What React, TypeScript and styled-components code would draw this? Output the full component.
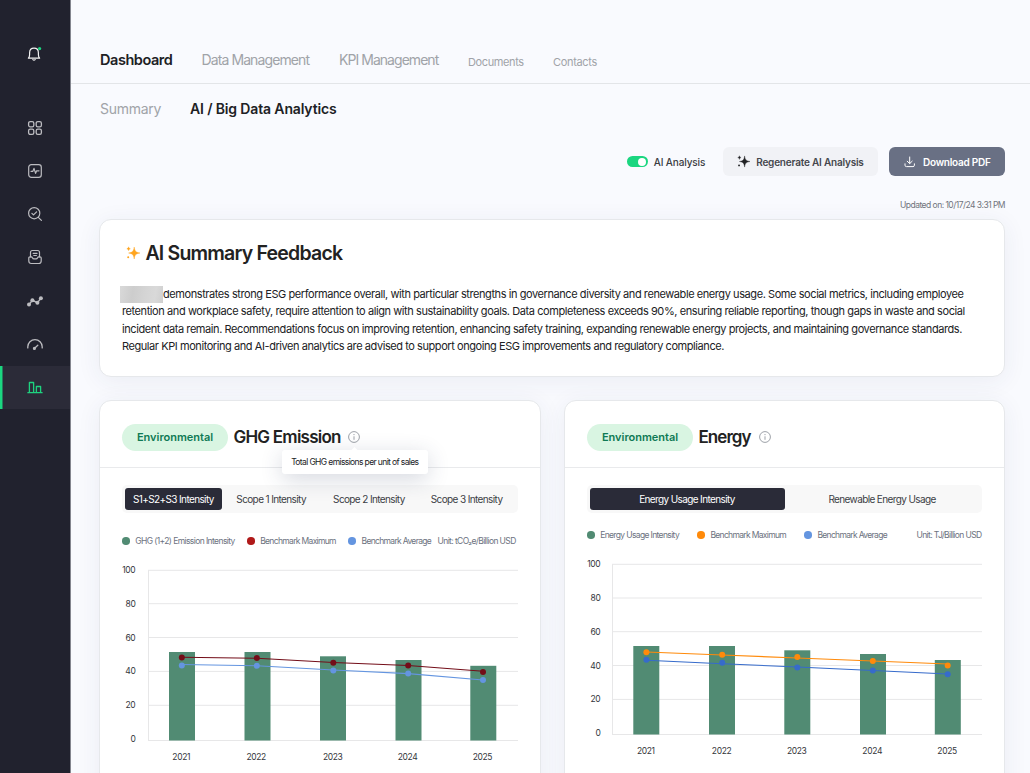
import React from "react";
import styled, { createGlobalStyle } from "styled-components";

const GlobalStyle = createGlobalStyle`
  *, *::before, *::after { box-sizing: border-box; }
  body {
    margin: 0;
    background: #f9fafe;
    font-family: Inter, "Liberation Sans", sans-serif;
    color: #222;
    overflow: hidden;
  }
`;

const Page = styled.div`
  display: flex;
  width: 1030px;
  height: 773px;
  overflow: hidden;
`;

const Sidebar = styled.aside`
  display: flex;
  flex-direction: column;
  flex: 0 0 71px;
  border-right: 1px solid #84868f;
  background: #21222e;
`;

const BellSlot = styled.div`
  display: flex;
  align-items: center;
  justify-content: center;
  height: 107px;
  padding-right: 2px;
  color: #f2f2f2;
`;

const NavItem = styled.div<{ $active?: boolean }>`
  display: flex;
  align-items: center;
  justify-content: center;
  height: 43.15px;
  padding: 0 1px 1px 0;
  color: ${(p) => (p.$active ? "#1ed27f" : "#bcbcc0")};
  background: ${(p) => (p.$active ? "#2b2b38" : "transparent")};
  box-shadow: ${(p) => (p.$active ? "inset 2.5px 0 0 #1bd680" : "none")};
`;

const Main = styled.main`
  flex: 1;
  min-width: 0;
`;

const TopNav = styled.nav`
  display: flex;
  align-items: center;
  height: 84px;
  padding: 37px 0 0 29px;
  border-bottom: 1px solid #e3e5e8;
`;

const SubNav = styled.nav`
  display: flex;
  align-items: center;
  height: 49px;
  padding-left: 29px;
`;

const NavLink = styled.a<{ $w: number; $size?: number; $ls: number; $active?: boolean }>`
  flex: 0 0 ${(p) => p.$w}px;
  white-space: nowrap;
  font-size: ${(p) => p.$size ?? 14}px;
  line-height: 20px;
  font-weight: ${(p) => (p.$active ? 600 : 400)};
  letter-spacing: ${(p) => p.$ls}px;
  color: ${(p) => (p.$active ? "#202124" : "#a0a3a8")};
`;

const SmallNavLink = styled(NavLink)`
  padding-top: 3px;
`;

const Content = styled.div`
  padding: 0 25px 0 28px;
`;

const Toolbar = styled.div`
  display: flex;
  align-items: center;
  justify-content: flex-end;
  padding-top: 14px;
`;

const Toggle = styled.span`
  display: flex;
  justify-content: flex-end;
  width: 21px;
  height: 11px;
  padding: 1.5px;
  border-radius: 6px;
  background: #1bd680;
  &::after {
    content: "";
    width: 8px;
    height: 8px;
    border-radius: 50%;
    background: #fff;
  }
`;

const ToggleLabel = styled.span`
  margin: 0 17.8px 0 6px;
  font-size: 10px;
  font-weight: 500;
  letter-spacing: -0.13px;
  color: #3a3c42;
`;

const Button = styled.button<{ $dark?: boolean; $w: number; $ls: number }>`
  display: flex;
  align-items: center;
  width: ${(p) => p.$w}px;
  height: 29px;
  padding: 0 0 0 14px;
  gap: ${(p) => (p.$dark ? 7 : 6.2)}px;
  border: 0;
  border-radius: 6px;
  font: 600 10px Inter, sans-serif;
  letter-spacing: ${(p) => p.$ls}px;
  white-space: nowrap;
  color: ${(p) => (p.$dark ? "#fff" : "#45474d")};
  background: ${(p) => (p.$dark ? "#697084" : "#f1f2f6")};
  & + & { margin-left: 11px; }
`;

const Updated = styled.div`
  margin-top: 23px;
  text-align: right;
  font-size: 8.5px;
  line-height: 12px;
  letter-spacing: -0.53px;
  color: #70747c;
`;

const Card = styled.section`
  border: 1px solid #e6e8eb;
  border-radius: 12px;
  background: #fff;
  box-shadow: 0 4px 24px rgba(40, 55, 100, 0.07);
`;

const SummaryCard = styled(Card)`
  height: 158px;
  margin-top: 8px;
  padding: 21px 22px 0;
`;

const SummaryTitle = styled.h2`
  display: flex;
  align-items: center;
  gap: 5.7px;
  margin: 0 0 0 3.7px;
  height: 24px;
  font-size: 19.5px;
  font-weight: 600;
  letter-spacing: -0.79px;
  color: #222;
`;

const Paragraph = styled.p`
  margin: 21px 0 0;
  font-size: 11px;
  line-height: 17.3px;
  color: #202124;
`;

const Line = styled.span<{ $ls: number }>`
  display: flex;
  align-items: center;
  height: 17.3px;
  white-space: nowrap;
  letter-spacing: ${(p) => p.$ls}px;
`;

const Redacted = styled.span`
  flex: 0 0 43px;
  height: 17px;
  margin-left: -2px;
  background: linear-gradient(100deg, #d9d9d9, #cdcdcd 30%, #d5d5d5 60%, #d9d9d9 80%, #cfcfcf);
`;

const Grid = styled.div`
  display: grid;
  grid-template-columns: 442px 441px;
  gap: 23px;
  margin-top: 23px;
`;

const ChartCard = styled(Card)`
  height: 420px;
`;

const CardHeader = styled.header`
  display: flex;
  align-items: center;
  height: 67px;
  padding: 6px 0 0 22px;
  border-bottom: 1px solid #e9eaec;
`;

const Tag = styled.span`
  width: 106px;
  height: 27px;
  border-radius: 14px;
  background: #d9f5e2;
  color: #0f7a55;
  font-size: 11px;
  font-weight: 600;
  line-height: 27px;
  letter-spacing: -0.02px;
  text-align: center;
`;

const CardTitle = styled.h3<{ $ls: number; $gap: number }>`
  margin: 0 ${(p) => p.$gap}px 0 5.5px;
  font-size: 17px;
  font-weight: 600;
  line-height: 24px;
  letter-spacing: ${(p) => p.$ls}px;
  color: #222;
`;

const InfoAnchor = styled.span`
  position: relative;
  display: flex;
`;

const Tooltip = styled.span`
  position: absolute;
  z-index: 2;
  top: 19px;
  left: -66.5px;
  width: 146px;
  height: 24px;
  border-radius: 3px;
  background: #fff;
  box-shadow: 0 5px 22px rgba(40, 55, 90, 0.2);
  font-size: 8.5px;
  line-height: 24px;
  letter-spacing: -0.62px;
  text-align: center;
  white-space: nowrap;
  color: #202124;
  &::before {
    content: "";
    position: absolute;
    top: -2px;
    left: 70px;
    width: 5px;
    height: 5px;
    background: #fff;
    transform: rotate(45deg);
  }
`;

const CardBody = styled.div`
  padding: 17px 22px 0;
`;

const Tabs = styled.div`
  display: flex;
  height: 28px;
  padding: 3px 2.5px;
  border-radius: 5px;
  background: #f8f8f8;
`;

const Tab = styled.div<{ $active?: boolean }>`
  flex: 1 1 0;
  border-radius: 3px;
  background: ${(p) => (p.$active ? "#2a2b38" : "transparent")};
  color: ${(p) => (p.$active ? "#fff" : "#3c3e45")};
  font-size: 10px;
  line-height: 22px;
  letter-spacing: -0.62px;
  text-align: center;
  white-space: nowrap;
`;

const Legend = styled.div<{ $top: number }>`
  display: flex;
  align-items: center;
  height: 12px;
  margin-top: ${(p) => p.$top}px;
  font-size: 8.5px;
  white-space: nowrap;
  color: #6c7280;
`;

const LegendItem = styled.span<{ $color: string; $w: number; $ls?: number }>`
  display: flex;
  align-items: center;
  flex: 0 0 ${(p) => p.$w}px;
  letter-spacing: ${(p) => p.$ls ?? -0.67}px;
  &::before {
    content: "";
    width: 7.5px;
    height: 7.5px;
    margin-right: 5.7px;
    border-radius: 50%;
    background: ${(p) => p.$color};
  }
`;

const Unit = styled.span<{ $ls: number; $inset?: number }>`
  margin: 0 ${(p) => p.$inset ?? 0}px 0 auto;
  letter-spacing: ${(p) => p.$ls}px;
`;

const ChartSvg = styled.svg`
  display: block;
  margin-top: 13px;
  overflow: visible;
  text {
    font-family: Inter, sans-serif;
    font-size: 8.5px;
    letter-spacing: -0.35px;
    fill: #34363b;
  }
`;

const SPARKLE = "M8.2 1C8.8 5.2 9.8 6.3 14 7 9.8 7.7 8.8 8.8 8.2 13 7.6 8.8 6.6 7.7 2.6 7 6.6 6.3 7.6 5.2 8.2 1Z";

const Sparkles = ({ size, color }: { size: number; color: string }) => (
  <svg width={size} height={size} viewBox="0 0 14 14" fill={color}>
    <path d={SPARKLE} stroke={color} strokeWidth=".4" />
    <path d="M2.6 .8Q2.8 2.5 4.4 2.8 2.8 3.1 2.6 4.8 2.4 3.1.8 2.8 2.4 2.5 2.6.8Z" stroke={color} strokeWidth=".3" />
    <circle cx="2.2" cy="11.2" r="1" />
  </svg>
);

const Icon = ({ children, w = 1.2 }: { children: React.ReactNode; w?: number }) => (
  <svg width="16" height="16" viewBox="0 0 16 16" fill="none" stroke="currentColor" strokeWidth={w} strokeLinecap="round" strokeLinejoin="round">
    {children}
  </svg>
);

const InfoIcon = () => (
  <svg width="12" height="12" viewBox="0 0 12 12" fill="none" stroke="#9da1a8">
    <circle cx="6" cy="6" r="5.4" strokeWidth="1" />
    <path d="M6 5.3V8.8" strokeWidth="1" />
    <circle cx="6" cy="3.6" r=".65" fill="#9da1a8" stroke="none" />
  </svg>
);

const BellIcon = () => (
  <Icon w={1.2}>
    <path d="M2.4 12.2H13.6C12.7 11.2 12.4 10.4 12.4 8.8V7C12.4 4.2 10.6 2.2 8 2.2S3.6 4.2 3.6 7V8.8C3.6 10.4 3.3 11.2 2.4 12.2Z" />
    <path d="M6.8 13.6Q8 14.6 9.2 13.6" />
    <circle cx="13.6" cy="2.6" r="1.6" fill="#1bd680" stroke="none" />
  </Icon>
);

const navIcons: React.ReactNode[] = [
  <Icon w={1.3}>
    <rect x="1.6" y="1.6" width="5.2" height="5.2" rx="1.6" />
    <rect x="9.2" y="1.6" width="5.2" height="5.2" rx="1.6" />
    <rect x="1.6" y="9.2" width="5.2" height="5.2" rx="1.6" />
    <rect x="9.2" y="9.2" width="5.2" height="5.2" rx="1.6" />
  </Icon>,
  <Icon>
    <rect x="1.7" y="1.7" width="12.6" height="12.6" rx="2.6" />
    <path d="M4 8.3H5.9L7 5.4 8.6 10.4 9.6 7.8H12" />
  </Icon>,
  <Icon>
    <circle cx="7.2" cy="7.2" r="5.6" />
    <path d="M11.3 11.3L14.4 14.4M4.9 7.3L6.5 8.9 9.6 5.8" />
  </Icon>,
  <Icon>
    <path d="M3.5 7.8V3.4Q3.5 1.5 5.4 1.5H10.6Q12.5 1.5 12.5 3.4V7.8M6.2 4.4H10M6.8 6.5H9.4" />
    <path d="M1.8 9Q1.8 7.8 3 7.8H4.3Q5 7.8 5.4 8.7 5.9 9.9 7 9.9H9Q10.1 9.9 10.6 8.7 11 7.8 11.7 7.8H13Q14.2 7.8 14.2 9V12Q14.2 14.5 11.7 14.5H4.3Q1.8 14.5 1.8 12Z" />
  </Icon>,
  <Icon w={1.4}>
    <path d="M2 11.6L5.4 7.2 10.4 9.8 13.9 5.2" />
    <g fill="currentColor" stroke="none">
      <circle cx="2" cy="11.6" r="2" />
      <circle cx="5.4" cy="7.2" r="2" />
      <circle cx="10.4" cy="9.8" r="2" />
      <circle cx="13.9" cy="5.2" r="2" />
    </g>
  </Icon>,
  <Icon w={1.3}>
    <path d="M.8 11.9V10.8A7.2 7.2 0 0 1 15.2 10.8V11.9" />
    <path d="M7.6 12.3L10.8 9.2" />
    <circle cx="7.4" cy="12.4" r=".9" fill="currentColor" />
  </Icon>,
  <Icon w={1.3}>
    <path d="M.9 13.7H15.1M2.4 13.7V3.5H6.6V13.7M9.4 13.7V7.5H13.6V13.7" />
  </Icon>,
];

const DownloadIcon = () => (
  <svg width="13" height="13" viewBox="0 0 13 13" fill="none" stroke="#fff" strokeWidth="1" strokeLinecap="round" strokeLinejoin="round">
    <path d="M6.7 2V8.4M4.2 6.2L6.7 8.6 9.2 6.2M2 8.8V10.2Q2 11.6 3.4 11.6H10Q11.4 11.6 11.4 10.2V8.8" />
  </svg>
);

type Pt = [number, number];
type Series = { color: string; line: number[]; dots: number[] };
type ChartProps = { bars: Pt[]; xs: number[]; grid: number[]; series: Series[]; zero: number; left: number; right: number };

const YEARS = ["2021", "2022", "2023", "2024", "2025"];

const Chart = ({ bars, xs, grid, series, zero, left, right }: ChartProps) => (
  <ChartSvg width={right} height="206" viewBox={`0 0 ${right} 206`}>
    {grid.map((y, i) => (
      <g key={i}>
        <line x1={left} x2={right} y1={y} y2={y} stroke="#e7e7e8" />
        <text x="13.4" y={(i === 5 ? zero : y) + 3} textAnchor="end">{100 - i * 20}</text>
      </g>
    ))}
    <line x1={left + 0.5} x2={left + 0.5} y1={grid[0]} y2={grid[5]} stroke="#e7e7e8" />
    {bars.map(([x, y], i) => (
      <g key={i}>
        <rect x={x} y={y} width="26" height={grid[5] - y} fill="#518b73" />
        <text x={xs[i] - 0.6} y="199.8" textAnchor="middle">{YEARS[i]}</text>
      </g>
    ))}
    {series.map((s) => (
      <g key={s.color} fill={s.color}>
        <polyline points={s.line.map((y, i) => `${xs[i]},${y}`).join(" ")} fill="none" stroke={s.color} strokeWidth="1.1" />
        {s.dots.map((y, i) => <circle key={i} cx={xs[i]} cy={y} r="3" />)}
      </g>
    ))}
  </ChartSvg>
);

const ghg: ChartProps = {
  left: 26,
  right: 396,
  bars: [[47, 92], [122.5, 92], [198, 96.3], [273.5, 100], [348.3, 105.8]],
  xs: [59.8, 134.8, 211.3, 286.2, 361],
  grid: [10.3, 43.7, 77.5, 111.4, 145.3, 180.5],
  zero: 179,
  series: [
    { color: "#730d18", line: [97.3, 98.3, 102.5, 105.5, 111.3], dots: [97.5, 98, 102.7, 105.6, 112] },
    { color: "#6495e0", line: [104.5, 105.8, 110, 113.6, 120], dots: [105.6, 105.8, 110.4, 113.6, 120] },
  ],
};

const energy: ChartProps = {
  left: 25,
  right: 395,
  bars: [[46.3, 92], [122, 92], [197.3, 96.3], [273, 100], [347.8, 106]],
  xs: [59.4, 135.2, 210.3, 285.8, 360.7],
  grid: [10.3, 44, 77.7, 111.5, 145.4, 180.5],
  zero: 179.2,
  series: [
    { color: "#ff8a0a", line: [98, 101, 104, 107, 110], dots: [98.3, 100.8, 103, 107, 111.5] },
    { color: "#366bcb", line: [106.2, 109.7, 113, 116.5, 120], dots: [105.8, 108.8, 113.6, 116.4, 120.2] },
  ],
};

export default function App() {
  return (
    <Page>
      <GlobalStyle />
      <Sidebar>
        <BellSlot><BellIcon /></BellSlot>
        {navIcons.map((icon, i) => (
          <NavItem key={i} $active={i === 6}>{icon}</NavItem>
        ))}
      </Sidebar>
      <Main>
        <TopNav>
          <NavLink $active $w={101.5} $size={14.5} $ls={-0.45}>Dashboard</NavLink>
          <NavLink $w={137.5} $ls={-0.9}>Data Management</NavLink>
          <NavLink $w={129} $ls={-0.96}>KPI Management</NavLink>
          <SmallNavLink $w={85} $size={11} $ls={-0.38}>Documents</SmallNavLink>
          <SmallNavLink $w={60} $size={11} $ls={-0.32}>Contacts</SmallNavLink>
        </TopNav>
        <SubNav>
          <NavLink $w={90} $ls={-0.28}>Summary</NavLink>
          <NavLink $active $w={160} $ls={-0.14}>AI / Big Data Analytics</NavLink>
        </SubNav>
        <Content>
          <Toolbar>
            <Toggle />
            <ToggleLabel>AI Analysis</ToggleLabel>
            <Button $w={155} $ls={-0.2}><Sparkles size={13} color="#202124" />Regenerate AI Analysis</Button>
            <Button $dark $w={116} $ls={-0.24}><DownloadIcon />Download PDF</Button>
          </Toolbar>
          <Updated>Updated on: 10/17/24 3:31 PM</Updated>
          <SummaryCard>
            <SummaryTitle><Sparkles size={14} color="#ffa51f" />AI Summary Feedback</SummaryTitle>
            <Paragraph>
              <Line $ls={-0.425}><Redacted />demonstrates strong ESG performance overall, with particular strengths in governance diversity and renewable energy usage. Some social metrics, including employee</Line>
              <Line $ls={-0.418}>retention and workplace safety, require attention to align with sustainability goals. Data completeness exceeds 90%, ensuring reliable reporting, though gaps in waste and social</Line>
              <Line $ls={-0.424}>incident data remain. Recommendations focus on improving retention, enhancing safety training, expanding renewable energy projects, and maintaining governance standards.</Line>
              <Line $ls={-0.43}>Regular KPI monitoring and AI-driven analytics are advised to support ongoing ESG improvements and regulatory compliance.</Line>
            </Paragraph>
          </SummaryCard>
          <Grid>
            <ChartCard>
              <CardHeader>
                <Tag>Environmental</Tag>
                <CardTitle $ls={-0.77} $gap={7.7}>GHG Emission</CardTitle>
                <InfoAnchor>
                  <InfoIcon />
                  <Tooltip>Total GHG emissions per unit of sales</Tooltip>
                </InfoAnchor>
              </CardHeader>
              <CardBody>
                <Tabs>
                  <Tab $active>S1+S2+S3 Intensity</Tab>
                  <Tab>Scope 1 Intensity</Tab>
                  <Tab>Scope 2 Intensity</Tab>
                  <Tab>Scope 3 Intensity</Tab>
                </Tabs>
                <Legend $top={22}>
                  <LegendItem $color="#518b73" $w={125} $ls={-0.6}>GHG (1+2) Emission Intensity</LegendItem>
                  <LegendItem $color="#b01919" $w={101.3}>Benchmark Maximum</LegendItem>
                  <LegendItem $color="#6495e0" $w={85}>Benchmark Average</LegendItem>
                  <Unit $ls={-0.61} $inset={2.3}>Unit: tCO₂e/Billion USD</Unit>
                </Legend>
                <Chart {...ghg} />
              </CardBody>
            </ChartCard>
            <ChartCard>
              <CardHeader>
                <Tag>Environmental</Tag>
                <CardTitle $ls={-0.95} $gap={8.5}>Energy</CardTitle>
                <InfoAnchor><InfoIcon /></InfoAnchor>
              </CardHeader>
              <CardBody>
                <Tabs>
                  <Tab $active>Energy Usage Intensity</Tab>
                  <Tab>Renewable Energy Usage</Tab>
                </Tabs>
                <Legend $top={16}>
                  <LegendItem $color="#518b73" $w={110.2} $ls={-0.64}>Energy Usage Intensity</LegendItem>
                  <LegendItem $color="#ff8a0a" $w={107}>Benchmark Maximum</LegendItem>
                  <LegendItem $color="#6495e0" $w={85}>Benchmark Average</LegendItem>
                  <Unit $ls={-0.62} $inset={0.5}>Unit: TJ/Billion USD</Unit>
                </Legend>
                <Chart {...energy} />
              </CardBody>
            </ChartCard>
          </Grid>
        </Content>
      </Main>
    </Page>
  );
}
